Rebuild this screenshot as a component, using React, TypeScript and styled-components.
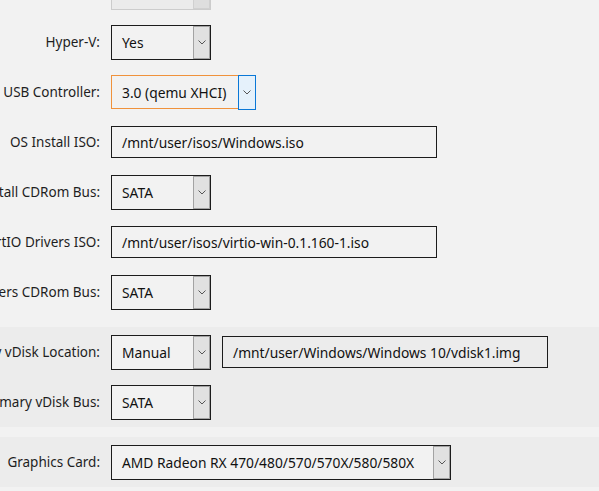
import React from "react";
import styled, { createGlobalStyle, css } from "styled-components";

const Global = createGlobalStyle`
  html, body { margin: 0; padding: 0; background: #f2f2f2; overflow: hidden; }
  body { font-family: "Noto Sans", "Open Sans", sans-serif; font-size: 13.8px; color: #1e1e1e; }
`;

const Page = styled.div`
  width: 599px;
  margin-top: -33px;
  display: flex;
  flex-direction: column;
  gap: 10px;
`;

const Section = styled.section<{ $shaded?: boolean }>`
  background: ${(p) => (p.$shaded ? "#ececec" : "transparent")};
  display: flex;
  flex-direction: column;
`;

const Row = styled.div`
  height: 50px;
  display: grid;
  grid-template-columns: 100px auto;
  column-gap: 11px;
  align-items: center;
`;

const Label = styled.label`
  display: flex;
  justify-content: flex-end;
  white-space: nowrap;
  font-size: 13.5px;
  color: #1e1e1e;
`;

const Controls = styled.div`
  display: flex;
  align-items: center;
  gap: 11px;
`;

type Variant = "normal" | "focus" | "disabled";

const SelectBox = styled.div<{ $w: number; $variant: Variant }>`
  box-sizing: border-box;
  width: ${(p) => p.$w}px;
  height: 35px;
  display: flex;
  align-items: stretch;
  border: 1.5px solid #1c1c1c;
  background: #f2f2f2;
  ${(p) =>
    p.$variant === "focus" &&
    css`
      border-color: #f0923c;
      height: 34px;
    `}
  ${(p) =>
    p.$variant === "disabled" &&
    css`
      border-color: #cccccc;
      background: #ebebeb;
    `}
`;

const SelectValue = styled.span`
  flex: 1;
  display: flex;
  align-items: center;
  padding-left: 10px;
  white-space: nowrap;
  overflow: hidden;
  color: #111;
`;

const ArrowBox = styled.span<{ $variant: Variant }>`
  box-sizing: border-box;
  width: 17px;
  flex: none;
  display: flex;
  align-items: center;
  justify-content: center;
  background: #e1e1e1;
  border: 1px solid #a3a3a3;
  color: #444;
  ${(p) =>
    p.$variant === "focus" &&
    css`
      margin: -1.5px -1.5px -1.5px 0;
      width: 18px;
      background: #e5f1fb;
      border: 1.5px solid #0a78d7;
    `}
  ${(p) =>
    p.$variant === "disabled" &&
    css`
      background: #dedede;
      border-color: #d0d0d0;
    `}
`;

const TextInput = styled.div<{ $w: number }>`
  box-sizing: border-box;
  width: ${(p) => p.$w}px;
  height: 32px;
  border: 1.5px solid #1c1c1c;
  display: flex;
  align-items: center;
  padding-left: 10px;
  white-space: nowrap;
  color: #111;
`;

const Chevron = () => (
  <svg width="8" height="5" viewBox="0 0 8 5" fill="none">
    <path d="M0.5 0.5 L4 4 L7.5 0.5" stroke="#555" strokeWidth="1" />
  </svg>
);

const Select = ({ value, width = 100, variant = "normal" }: { value: string; width?: number; variant?: Variant }) => (
  <SelectBox $w={width} $variant={variant}>
    <SelectValue>{value}</SelectValue>
    <ArrowBox $variant={variant}>
      <Chevron />
    </ArrowBox>
  </SelectBox>
);

export default function App() {
  return (
    <>
      <Global />
      <Page>
        <Section>
          <Row>
            <Label>Machine:</Label>
            <Controls>
              <Select value="" variant="disabled" />
            </Controls>
          </Row>
          <Row>
            <Label>Hyper-V:</Label>
            <Controls>
              <Select value="Yes" />
            </Controls>
          </Row>
          <Row>
            <Label>USB Controller:</Label>
            <Controls>
              <Select value="3.0 (qemu XHCI)" width={144} variant="focus" />
            </Controls>
          </Row>
          <Row>
            <Label>OS Install ISO:</Label>
            <Controls>
              <TextInput $w={326}>/mnt/user/isos/Windows.iso</TextInput>
            </Controls>
          </Row>
          <Row>
            <Label>OS Install CDRom Bus:</Label>
            <Controls>
              <Select value="SATA" />
            </Controls>
          </Row>
          <Row>
            <Label>VirtIO Drivers ISO:</Label>
            <Controls>
              <TextInput $w={326}>/mnt/user/isos/virtio-win-0.1.160-1.iso</TextInput>
            </Controls>
          </Row>
          <Row>
            <Label>VirtIO Drivers CDRom Bus:</Label>
            <Controls>
              <Select value="SATA" />
            </Controls>
          </Row>
        </Section>
        <Section $shaded>
          <Row>
            <Label>Primary vDisk Location:</Label>
            <Controls>
              <Select value="Manual" />
              <TextInput $w={326}>/mnt/user/Windows/Windows 10/vdisk1.img</TextInput>
            </Controls>
          </Row>
          <Row>
            <Label>Primary vDisk Bus:</Label>
            <Controls>
              <Select value="SATA" />
            </Controls>
          </Row>
        </Section>
        <Section $shaded>
          <Row>
            <Label>Graphics Card:</Label>
            <Controls>
              <Select value="AMD Radeon RX 470/480/570/570X/580/580X" width={340} />
            </Controls>
          </Row>
        </Section>
      </Page>
    </>
  );
}
